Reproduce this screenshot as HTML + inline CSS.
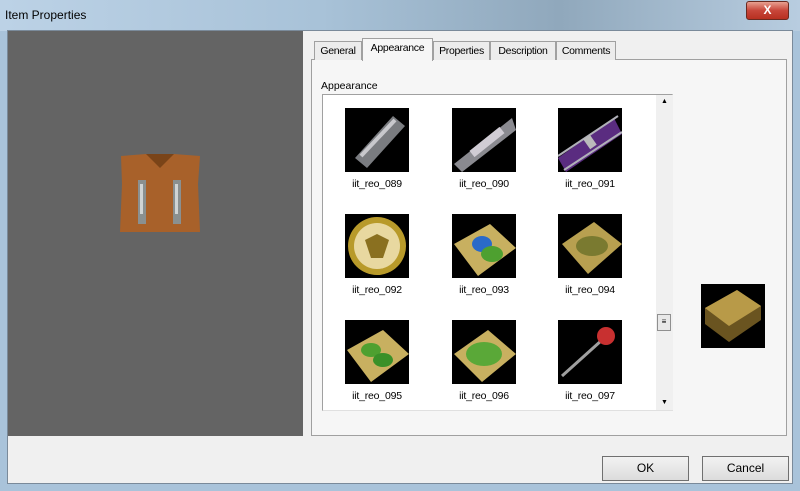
<!DOCTYPE html>
<html><head><style>
*{margin:0;padding:0;box-sizing:border-box}
body{width:800px;height:491px;overflow:hidden;background:#a9c3da;font-family:"Liberation Sans",sans-serif;font-size:11px;color:#000;position:relative}
.abs{position:absolute}
.title{left:0;top:0;width:800px;height:31px;background:linear-gradient(90deg,#bcd2e6 0%,#a8c2d8 40%,#90a8bc 70%,#b8cde0 100%)}
.client{left:7px;top:30px;width:786px;height:454px;background:#f0f0f0;border:1px solid #7a8a9a}
.thumb{position:absolute;width:64px;height:64px;background:#000;overflow:hidden}
.lbl{position:absolute;width:100px;text-align:center;font-size:10.5px;letter-spacing:-0.2px}
.tab{position:absolute;top:41px;height:19px;border:1px solid #a0a0a0;border-bottom:none;background:#ececec;padding-top:3px;text-align:center;font-size:10.5px;letter-spacing:-0.3px;white-space:nowrap;overflow:hidden}
.btn{position:absolute;top:456px;width:87px;height:25px;border:1px solid #707070;background:linear-gradient(#f2f2f2,#dcdcdc);text-align:center;line-height:23px;font-size:12px}
</style></head><body>
<div class="abs title"></div>
<div class="abs" style="left:5px;top:8px;font-size:12px">Item Properties</div>
<div class="abs" style="left:746px;top:1px;width:43px;height:19px;border-radius:3px;background:linear-gradient(#e8a090,#c8463a 50%,#b83020);border:1px solid #6a2a20;color:#fff;text-align:center;font-weight:bold;font-size:12px;line-height:17px">X</div>
<div class="abs client"></div>
<div class="abs" style="left:8px;top:31px;width:295px;height:405px;background:#646464"></div>
<svg class="abs" style="left:118px;top:154px" width="84" height="80"><path d="M3 2 L28 0 L42 10 L56 0 L82 2 L80 30 L82 78 L2 78 L4 30 Z" fill="#a8612a"/><path d="M28 0 L42 14 L56 0" fill="#7a4418"/><rect x="20" y="26" width="8" height="44" fill="#8a9090"/><rect x="55" y="26" width="8" height="44" fill="#8a9090"/><rect x="22" y="30" width="3" height="30" fill="#d0d4d4"/><rect x="57" y="30" width="3" height="30" fill="#d0d4d4"/></svg>
<div class="abs" style="left:311px;top:59px;width:476px;height:377px;border:1px solid #a0a0a0;background:#f6f6f6"></div>
<div class="tab" style="left:314px;width:48px">General</div>
<div class="tab" style="left:362px;width:71px;top:38px;height:23px;background:#f6f6f6;z-index:2">Appearance</div>
<div class="tab" style="left:433px;width:57px">Properties</div>
<div class="tab" style="left:490px;width:66px">Description</div>
<div class="tab" style="left:556px;width:60px">Comments</div>
<div class="abs" style="left:321px;top:80px;font-size:10.5px">Appearance</div>
<div class="abs" style="left:322px;top:94px;width:351px;height:317px;background:#fff;border:1px solid #a0a0a0;border-right-color:#e0e0e0;border-bottom-color:#e0e0e0"></div>
<div class="abs" style="left:656px;top:95px;width:17px;height:315px;background:#f0f0f0"></div>
<div class="abs" style="left:661px;top:98px;font-size:7px">▲</div>
<div class="abs" style="left:661px;top:399px;font-size:7px">▼</div>
<div class="abs" style="left:657px;top:314px;width:14px;height:17px;border:1px solid #909090;background:#e8e8e8;text-align:center;font-size:8px;line-height:14px">≡</div>

<div class="thumb" style="left:345px;top:108px"><svg width="64" height="64"><path d="M10 50 L48 8 L60 18 L22 60 Z" fill="#7a7c80"/><path d="M16 48 L50 12" stroke="#c8c8cc" stroke-width="4"/></svg></div>
<div class="thumb" style="left:452px;top:108px"><svg width="64" height="64"><path d="M2 56 L60 10 L64 22 L10 64 Z" fill="#8a8a90"/><path d="M20 46 L50 22" stroke="#d0ccd4" stroke-width="8"/></svg></div>
<div class="thumb" style="left:558px;top:108px"><svg width="64" height="64"><path d="M0 50 L56 10 L64 26 L8 64 Z" fill="#5a2c80"/><path d="M0 48 L60 8 M6 62 L64 24" stroke="#b0b0b8" stroke-width="2"/><rect x="28" y="28" width="8" height="12" fill="#bbb" transform="rotate(-35 32 34)"/></svg></div>
<div class="lbl" style="left:327px;top:178px">iit_reo_089</div>
<div class="lbl" style="left:434px;top:178px">iit_reo_090</div>
<div class="lbl" style="left:540px;top:178px">iit_reo_091</div>

<div class="thumb" style="left:345px;top:214px"><svg width="64" height="64"><circle cx="32" cy="32" r="29" fill="#b89a2a"/><circle cx="32" cy="32" r="23" fill="#e8d8a0"/><path d="M20 26 L32 20 L44 26 L38 44 L26 44 Z" fill="#8a7020"/></svg></div>
<div class="thumb" style="left:452px;top:214px"><svg width="64" height="64"><path d="M2 30 L38 10 L64 34 L26 62 Z" fill="#c8b060"/><ellipse cx="30" cy="30" rx="10" ry="8" fill="#2a6ac8"/><ellipse cx="40" cy="40" rx="11" ry="8" fill="#4ea030"/></svg></div>
<div class="thumb" style="left:558px;top:214px"><svg width="64" height="64"><path d="M4 30 L36 8 L64 30 L30 60 Z" fill="#b8a050"/><ellipse cx="34" cy="32" rx="16" ry="10" fill="#7a7a30"/></svg></div>
<div class="lbl" style="left:327px;top:284px">iit_reo_092</div>
<div class="lbl" style="left:434px;top:284px">iit_reo_093</div>
<div class="lbl" style="left:540px;top:284px">iit_reo_094</div>

<div class="thumb" style="left:345px;top:320px"><svg width="64" height="64"><path d="M2 30 L38 10 L64 34 L26 62 Z" fill="#c8b060"/><ellipse cx="26" cy="30" rx="10" ry="7" fill="#4ea030"/><ellipse cx="38" cy="40" rx="10" ry="7" fill="#3a9028"/></svg></div>
<div class="thumb" style="left:452px;top:320px"><svg width="64" height="64"><path d="M2 34 L36 10 L64 34 L30 62 Z" fill="#c8b060"/><ellipse cx="32" cy="34" rx="18" ry="12" fill="#5aa838"/></svg></div>
<div class="thumb" style="left:558px;top:320px"><svg width="64" height="64"><path d="M4 56 L44 20" stroke="#a0a0a0" stroke-width="3"/><circle cx="48" cy="16" r="9" fill="#c83030"/></svg></div>
<div class="lbl" style="left:327px;top:390px">iit_reo_095</div>
<div class="lbl" style="left:434px;top:390px">iit_reo_096</div>
<div class="lbl" style="left:540px;top:390px">iit_reo_097</div>

<div class="thumb" style="left:701px;top:284px"><svg width="64" height="64"><path d="M4 24 L36 6 L60 22 L60 36 L28 58 L4 40 Z" fill="#6a5420"/><path d="M4 24 L36 6 L60 22 L28 42 Z" fill="#b89a48"/></svg></div>

<div class="btn" style="left:602px">OK</div>
<div class="btn" style="left:702px">Cancel</div>
</body></html>
